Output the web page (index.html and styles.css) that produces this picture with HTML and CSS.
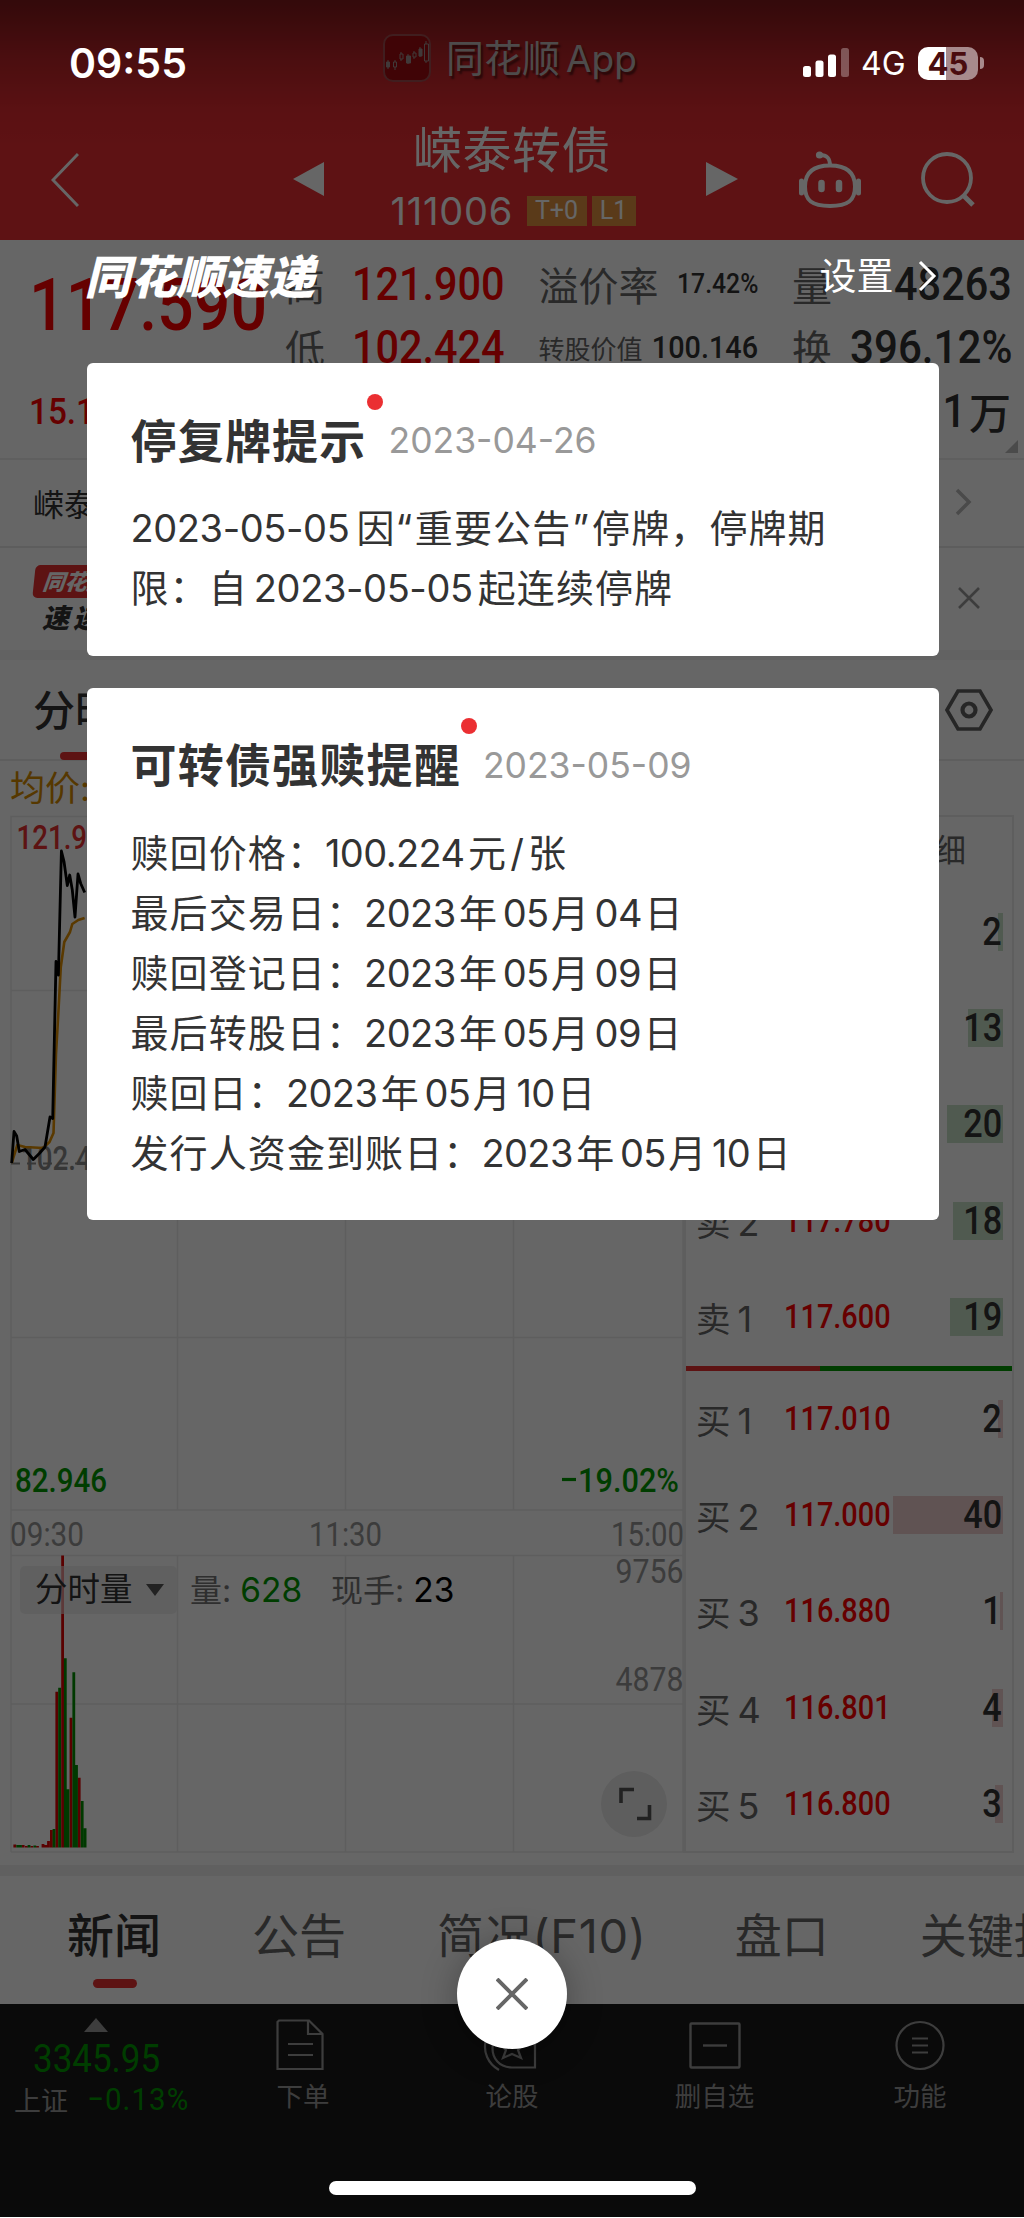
FILE: index.html
```html
<!DOCTYPE html>
<html lang="zh-CN">
<head>
<meta charset="utf-8">
<title>嵘泰转债 111006</title>
<link rel="stylesheet" href="styles.css">
</head>
<body>
<div class="screen">
  <main class="app">
    <header class="header">
      <div class="brand">
        <svg class="brand-icon" viewBox="0 0 48 48" fill="none" stroke="#a09090" stroke-width="1">
          <rect x="1" y="1" width="46" height="46" rx="9" fill="#a00c0f" stroke="#a04c4e" stroke-width="2"/>
          <path d="M5 26v9M12 26v10M18 18v9M25 20v10M31 17v8M37 13v10M43 7v22"/>
          <path d="M3.500 28h3v5h-3zM23.500 22h4v7h-4zM36 15h3v7h-3z" fill="#a09090"/>
          <path d="M10.500 28h3v5h-3zM17 20h3v5h-3zM30 19h3v4h-3zM41.500 10h4v17h-4z" fill="#a00c0f"/>
        </svg>
        <span class="brand-name">同花顺<span class="brand-app">App</span></span>
      </div>
      <nav class="nav">
        <svg class="nav-back" viewBox="0 0 28 56" fill="none" stroke="#fff" stroke-width="3"><path d="M27 2 2 28l25 26"/></svg>
        <svg class="nav-prev" viewBox="0 0 31 34"><path d="M31 0v34L0 17z" fill="#fff"/></svg>
        <div class="nav-title">
          <h1>嵘泰转债</h1>
          <div class="nav-sub"><span class="code">111006</span><span class="badge wide">T+0</span><span class="badge">L1</span></div>
        </div>
        <svg class="nav-next" viewBox="0 0 32 34"><path d="M0 0v34l32-17z" fill="#fff"/></svg>
        <svg class="nav-bot" viewBox="0 0 62 58" fill="none" stroke="#fff" stroke-width="4">
          <path d="M21 4c8 0 10 4 10 11"/><circle cx="20.500" cy="4" r="3.600" fill="#fff" stroke="none"/>
          <path d="M31 14.500c17 0 25 7 25 21S49 55 31 55 6 49.500 6 35.500s8-21 25-21z"/>
          <path d="M2.500 30v12M59.500 30v12" stroke-width="5" stroke-linecap="round"/>
          <path d="M22.500 32v6M40 32v6" stroke-width="6.500" stroke-linecap="round"/>
        </svg>
        <svg class="nav-search" viewBox="0 0 54 56" fill="none" stroke="#fff" stroke-width="3.800"><circle cx="26" cy="27" r="24"/><path d="m42 44 10 10" stroke-width="5"/></svg>
      </nav>
    </header>

    <section class="quote">
      <div class="last"><span class="din price">117.590</span><span class="din change">15.1</span></div>
      <div class="stats">
        <div class="stat red"><label>高</label><span class="din end">121.900</span></div>
        <div class="stat"><label>溢价率</label><span class="din end xs">17.42%</span></div>
        <div class="stat"><label>量</label><span class="din end">48263</span></div>
        <div class="stat red"><label>低</label><span class="din end">102.424</span></div>
        <div class="stat"><label class="small">转股价值</label><span class="din end sm">100.146</span></div>
        <div class="stat"><label>换</label><span class="din end pct">396.12%</span></div>
        <div></div><div></div>
        <div class="stat amount"><span class="din end">.1</span><span class="wan">万</span></div>
      </div>
      <i class="corner"></i>
    </section>

    <section class="related">
      <span>嵘泰</span>
      <svg viewBox="0 0 18 28" fill="none" stroke="#b8b8b8" stroke-width="3.500"><path d="m2 2 12 12L2 26"/></svg>
    </section>

    <section class="express">
      <div class="express-logo">
        <div class="express-tag">同花顺</div>
        <div class="express-word">速递</div>
      </div>
      <svg viewBox="0 0 22 22" fill="none" stroke="#999" stroke-width="2.600"><path d="m1 1 20 20M21 1 1 21"/></svg>
    </section>

    <section class="chart-tabs">
      <span class="chart-tab">分时</span>
      <svg viewBox="0 0 48 42" fill="none" stroke="#606060" stroke-width="3.600"><path d="M13 2h22l11 19-11 19H13L2 21z"/><circle cx="24" cy="21" r="6.500" stroke-width="4.200"/></svg>
    </section>

    <div class="avg">均价:</div>

    <section class="market">
      <div class="charts">
        <svg class="plot" width="674" height="1038" viewBox="10 815 674 1038">
          <g stroke="#ebebeb" stroke-width="1.600" fill="none">
            <path d="M11 1852V816.500h672V1852M11 990.500h672M11 1337.500h672M11 1510h672M11 1555.500h672M11 1704h672M11 1852h672"/>
            <path d="M177.500 816v694M345.500 816v694M513.500 816v694M177.500 1555v297M345.500 1555v297M513.500 1555v297"/>
          </g>
          <path d="M11 1163.500h672" stroke="#8c8c8c" stroke-width="2" stroke-dasharray="9 7"/>
          <g class="axis medium">
            <text x="21" y="1169.500" textLength="102" lengthAdjust="spacingAndGlyphs" fill="#888">102.424</text>
            <text x="16.500" y="848.500" textLength="102" lengthAdjust="spacingAndGlyphs" fill="#e93030">121.900</text>
            <text x="15" y="1491.500" textLength="92" lengthAdjust="spacingAndGlyphs" fill="#009a00">82.946</text>
            <text x="578" y="1491.500" textLength="101" lengthAdjust="spacingAndGlyphs" fill="#009a00">19.02%</text>
            <path d="M562 1479.500h14" stroke="#009a00" stroke-width="3.200"/>
          </g>
          <g class="axis" fill="#969696">
            <text x="10" y="1545.500" textLength="74" lengthAdjust="spacingAndGlyphs">09:30</text>
            <text x="309" y="1545.500" textLength="73" lengthAdjust="spacingAndGlyphs">11:30</text>
            <text x="611" y="1545.500" textLength="73" lengthAdjust="spacingAndGlyphs">15:00</text>
            <text x="615.500" y="1583" textLength="68" lengthAdjust="spacingAndGlyphs">9756</text>
            <text x="615.500" y="1691" textLength="68" lengthAdjust="spacingAndGlyphs">4878</text>
          </g>
          <path d="M11.700 1163l5.600-18 7.700 2 18 1 6.500-6 4-9 2.500-79 2.300-40 2.500-47 3.500-25 5.700-10 2.300-8 6-4 6.300-2" fill="none" stroke="#e08f00" stroke-width="2.600" stroke-linejoin="round"/>
          <path d="M11.700 1163 14 1131.500l2.700 4.500 2.600 15.500 5.700-2 8.300 10 6-6 5.700-6.500 5-30 2.700 1.500 3.300-157 2.400 13.500 3-124 2.600 10.500 3.300 24 2.400-10.500 2.600 15 2.700 27 3-43 2.700 9.500 4 9" fill="none" stroke="#000" stroke-width="2.800" stroke-linejoin="round"/>
          <g stroke-width="2.800" fill="none">
            <path stroke="#e00000" d="M14.800 1844.500v3M23.200 1845v2.500M26.400 1846v1.500M31.800 1846v1.500M37.500 1846v1.500M43 1844v3.500M45.700 1845v2.500M48.500 1841v6.500M51.400 1830v17.500M56.800 1691.700v155.800M62.600 1555.500v292M71 1717.700v129.800M79.200 1777.700v69.800"/>
            <path stroke="#009000" d="M17.700 1845v2.500M20.500 1845v2.500M29 1845v2.500M34.800 1845.500v2M54 1829v18.500M59.600 1687.700v159.800M65.300 1658.300v189.200M68 1789.300v58.200M73.800 1672.300v175.200M76.500 1765v82.500M82.200 1801v46.500M85.100 1828.300v19.200"/>
          </g>
        </svg>
        <div class="vol-bar">
          <span class="vol-select">分时量<i></i></span>
          <span class="vol-item">量: <b class="green">628</b></span>
          <span class="vol-item hand">现手: <b>23</b></span>
        </div>
        <svg class="expand" viewBox="0 0 66 66"><circle cx="33" cy="33" r="33" fill="#eaeaea"/><path d="M20 32V18.500h13M48.500 34v13.500H36" fill="none" stroke="#555" stroke-width="3.600"/></svg>
      </div>

      <div class="book">
        <div class="book-head">细</div>
        <div class="level ask"><span class="name">卖<em>5</em></span><span></span><span class="qty"><i style="width:5px"></i><b class="din end">2</b></span></div>
        <div class="level ask"><span class="name">卖<em>4</em></span><span></span><span class="qty"><i style="width:35px"></i><b class="din end">13</b></span></div>
        <div class="level ask"><span class="name">卖<em>3</em></span><span></span><span class="qty"><i style="width:56px"></i><b class="din end">20</b></span></div>
        <div class="level ask"><span class="name">卖<em>2</em></span><span class="din cost">117.780</span><span class="qty"><i style="width:50px"></i><b class="din end">18</b></span></div>
        <div class="level ask"><span class="name">卖<em>1</em></span><span class="din cost">117.600</span><span class="qty"><i style="width:53px"></i><b class="din end">19</b></span></div>
        <div class="ratio"><i></i></div>
        <div class="level"><span class="name">买<em>1</em></span><span class="din cost">117.010</span><span class="qty"><i style="width:5px"></i><b class="din end">2</b></span></div>
        <div class="level"><span class="name">买<em>2</em></span><span class="din cost">117.000</span><span class="qty"><i style="width:110px"></i><b class="din end">40</b></span></div>
        <div class="level"><span class="name">买<em>3</em></span><span class="din cost">116.880</span><span class="qty"><i style="width:3px"></i><b class="din end">1</b></span></div>
        <div class="level"><span class="name">买<em>4</em></span><span class="din cost">116.801</span><span class="qty"><i style="width:11px"></i><b class="din end">4</b></span></div>
        <div class="level"><span class="name">买<em>5</em></span><span class="din cost">116.800</span><span class="qty"><i style="width:8px"></i><b class="din end">3</b></span></div>
      </div>
    </section>

    <section class="info-tabs">
      <span class="active">新闻</span><span>公告</span><span class="brief">简况(F10)</span><span>盘口</span><span>关键指标</span>
    </section>

    <footer class="toolbar">
      <div class="index">
        <i class="up"></i>
        <span class="din idx">3345.95</span>
        <div class="idx-row"><span class="idx-name">上证</span><span class="din idx-pct">−0.13%</span></div>
      </div>
      <div class="tool">
        <svg class="doc" width="48" height="52" viewBox="0 0 48 52" fill="none" stroke="#999" stroke-width="2.200"><path d="M3 1.500h30L46.500 15v35H1.500V3z"/><path d="M32 1.500V15h14M12 25h25M12 36h25"/></svg>
        <span>下单</span>
      </div>
      <div class="tool">
        <svg width="62" height="52" viewBox="0 0 62 52" fill="none" stroke="#999" stroke-width="2.200"><path d="M18 51C-5 38 1 3 31 3"/><path d="M54 25v23.500H31c-26 0-26-38 0-38 14 0 23 8 23 18"/><path d="m31 17 4 7 8 1-6 6 3 8-9-4-9 4 3-8-6-6 8-1z"/></svg>
        <span>论股</span>
      </div>
      <div class="tool">
        <svg width="52" height="52" viewBox="0 0 52 52" fill="none" stroke="#999" stroke-width="2.400"><rect x="1.500" y="4.500" width="49" height="44" rx="1"/><path d="M14 26.500h24"/></svg>
        <span>删自选</span>
      </div>
      <div class="tool last-tool">
        <svg width="50" height="52" viewBox="0 0 50 52" fill="none" stroke="#999" stroke-width="2.200"><circle cx="25" cy="26.500" r="23.500"/><path d="M17 19.500h16M17 26.500h16M17 33.500h16"/></svg>
        <span>功能</span>
      </div>
    </footer>
  </main>

  <div class="mask"></div>

  <div class="status">
    <span class="time">09:55</span>
    <svg class="signal" viewBox="0 0 46 30" fill="#fff"><rect y="18" width="8" height="11" rx="2.500"/><rect x="12.500" y="12.500" width="8" height="16.500" rx="2.500"/><rect x="25" y="6.500" width="8" height="22.500" rx="2.500"/><rect x="38" width="8" height="29" rx="2.500" opacity=".3"/></svg>
    <span class="net">4G</span>
    <div class="battery"><span>45</span></div><i class="nub"></i>
  </div>

  <div class="dialog">
    <div class="dialog-head">
      <span class="dialog-brand">同花顺速递</span>
      <span class="dialog-set">设置</span>
      <svg viewBox="0 0 20 32" fill="none" stroke="#fff" stroke-width="3"><path d="m2 2 14 14L2 30"/></svg>
    </div>
    <article class="card">
      <header><h2>停复牌提示<i></i></h2><time>2023-04-26</time></header>
      <p><span class="n first">2023-05-05</span>因<span class="open">“</span>重要公告<span class="shut">”</span>停牌，停牌期<br>限：自<span class="n inner">2023-05-05</span>起连续停牌</p>
    </article>
    <article class="card">
      <header><h2>可转债强赎提醒<i></i></h2><time>2023-05-09</time></header>
      <p>赎回价格：<span class="n lead">100.224</span>元<span class="slash">/</span>张<br>
      最后交易日：<span class="n lead">2023</span>年<span class="n">05</span>月<span class="n">04</span>日<br>
      赎回登记日：<span class="n lead">2023</span>年<span class="n">05</span>月<span class="n">09</span>日<br>
      最后转股日：<span class="n lead">2023</span>年<span class="n">05</span>月<span class="n">09</span>日<br>
      赎回日：<span class="n lead">2023</span>年<span class="n">05</span>月<span class="n">10</span>日<br>
      发行人资金到账日：<span class="n lead">2023</span>年<span class="n">05</span>月<span class="n">10</span>日</p>
    </article>
  </div>

  <button class="close" aria-label="关闭"><svg viewBox="0 0 32 32" fill="none" stroke="#666" stroke-width="4"><path d="m1 1 30 30M31 1 1 31"/></svg></button>
  <div class="home"></div>
</div>
</body>
</html>
```
FILE: styles.css
```css
* { box-sizing: border-box; margin: 0; padding: 0; }
body { background: #fff; font-family: Inter, "Noto Sans CJK SC", sans-serif; color: #333; }
i, em { font-style: normal; }
svg { display: block; flex: none; }
.screen { position: relative; width: 1024px; height: 2218px; overflow: hidden; }
.app { height: 2217px; display: flex; flex-direction: column; overflow: hidden; background: #fff; }
.app > * { flex: none; }

/* narrow figures used for every quote number */
.din { display: inline-block; font-family: Roboto, "Noto Sans CJK SC", sans-serif; font-weight: 500; transform: scaleX(.9); transform-origin: left center; white-space: nowrap; }
.din.end { transform-origin: right center; margin-left: -30px; }

/* header */
.header { height: 240px; color: #fff; background: linear-gradient(rgba(0,0,0,.45), rgba(0,0,0,.2) 60px, rgba(0,0,0,.04) 110px, transparent 150px) #eb2d32; }
.brand { height: 116px; padding-left: 383px; display: flex; align-items: center; gap: 15px; }
.brand-icon { width: 48px; height: 48px; }
.brand-name { font-size: 38px; line-height: 50px; color: #c0bcbc; text-shadow: 2px 3px 2px rgba(0,0,0,.5); white-space: nowrap; }
.brand-app { margin-left: 6px; font-size: 37px; }
.nav { height: 124px; padding-left: 51px; display: grid; grid-template-columns: 242px 31px 382px 32px 61px 62px 60px 54px; align-items: start; }
.nav-back { width: 28px; height: 56px; margin-top: 36px; }
.nav-prev, .nav-next { height: 34px; margin-top: 46px; }
.nav-prev { width: 31px; }
.nav-next { width: 32px; }
.nav-title { padding: 7px 6px 0 0; text-align: center; }
.nav-title h1 { font-size: 49px; line-height: 56px; font-weight: 400; letter-spacing: .5px; }
.nav-sub { margin-top: 12px; height: 40px; display: flex; justify-content: center; align-items: center; }
.code { font-size: 38px; line-height: 40px; font-weight: 400; width: 121px; margin-right: 15px; text-align: left; letter-spacing: .8px; text-indent: 1px; }
.badge { width: 44px; height: 30px; font-size: 25px; line-height: 30px; font-weight: 400; background: #e09140; color: #fff; font-family: Roboto, sans-serif; position: relative; left: 1px; }
.badge.wide { width: 60px; margin-right: 5px; }
.nav-bot { grid-column: 6; width: 62px; height: 58px; margin-top: 35px; }
.nav-search { grid-column: 8; width: 54px; height: 56px; margin-top: 35px; }

/* quote */
.quote { position: relative; height: 220px; display: grid; grid-template-columns: 286px 1fr; border-bottom: 2px solid #eee; }
.last { display: flex; flex-direction: column; padding-left: 29px; color: #f00; }
.price { font-size: 73px; line-height: 80px; margin-top: 25px; transform: scaleX(.885); }
.change { font-size: 37px; line-height: 40px; margin-top: 47px; }
.stats { display: grid; grid-template-columns: repeat(3, 218px); column-gap: 35.500px; grid-auto-rows: 63.500px; padding-top: 12px; }
.stat { display: flex; justify-content: space-between; align-items: center; white-space: nowrap; font-size: 46px; }
.stat label { font-size: 40px; color: #666; font-weight: 400; margin-left: -1px; }
.stat label.small { font-size: 26px; }
.stat .din { margin-right: -1px; }
.stat .xs { font-size: 27.500px; }
.stat .sm { font-size: 32px; }
.stat .pct { transform: scaleX(.915); }
.stat.red .din { color: #f00; }
.amount { justify-content: flex-end; gap: 3px; }
.amount .din { letter-spacing: 1px; }
.wan { font-size: 42px; font-weight: 500; }
.corner { position: absolute; right: 6px; bottom: 5px; border-left: 13px solid transparent; border-bottom: 13px solid #bbb; }

.related { height: 88px; padding: 0 51px 2px 33px; display: flex; justify-content: space-between; align-items: center; border-bottom: 2px solid #e8e8e8; font-size: 31px; }
.related svg { width: 18px; height: 28px; }
.express { height: 112px; padding: 17px 44px 0 34px; display: flex; justify-content: space-between; border-bottom: 10px solid #f4f4f4; }
.express svg { width: 22px; height: 22px; margin-top: 22px; }
.express-logo { width: 110px; font-style: italic; font-weight: 900; color: #333; white-space: nowrap; }
.express-tag { height: 33px; padding-left: 9px; font-size: 22px; line-height: 35px; color: #fff; background: #e93030; border-radius: 5px; transform: skewX(-6deg); }
.express-word { margin-top: 6px; padding-left: 8px; font-size: 27px; line-height: 30px; letter-spacing: 4px; }

.chart-tabs { height: 101px; padding: 0 31px 0 33px; display: flex; justify-content: space-between; align-items: center; border-bottom: 2px solid #eaeaea; }
.chart-tabs svg { width: 48px; height: 42px; }
.chart-tab { position: relative; height: 100px; line-height: 101px; font-size: 42px; font-weight: 500; }
.chart-tab::after { content: ""; position: absolute; left: 27px; bottom: 0; width: 44px; height: 8px; border-radius: 4px; background: #e93030; }
.avg { height: 54px; padding-left: 10px; line-height: 55px; font-size: 35px; font-weight: 400; color: #d68c00; }

/* charts + order book */
.market { height: 1050px; padding-left: 10px; display: grid; grid-template-columns: 673px 331px; align-items: start; }
.charts { position: relative; height: 1038px; }
.axis { font-family: Roboto, sans-serif; font-size: 33px; font-weight: 400; }
.axis.medium { font-weight: 500; }
.vol-bar { position: absolute; left: 10px; top: 751px; height: 48px; display: flex; align-items: center; font-size: 32px; line-height: 48px; white-space: nowrap; }
.vol-select { width: 157px; height: 48px; padding-left: 15px; display: flex; align-items: center; gap: 13px; border-radius: 5px; background: rgba(232,232,232,.62); font-size: 32.500px; }
.vol-select i { border: 9px solid transparent; border-top: 12px solid #555; border-bottom: 0; }
.vol-item { margin-left: 13px; width: 128px; color: #777; font-weight: 400; }
.vol-item b { font-weight: 400; font-size: 33.500px; color: #000; }
.vol-item .green { color: #009a00; }
.expand { position: absolute; left: 591px; top: 956px; width: 66px; height: 66px; }
.book { height: 1038px; border: 2px solid #eaeaea; border-width: 2px 2px 2px 3px; }
.book-head { height: 67px; padding-right: 46px; text-align: right; line-height: 67px; font-size: 32px; color: #666; }
.level { height: 96.400px; padding: 0 9px 1px 10px; display: grid; grid-template-columns: 88px minmax(0, 1fr) 110px; align-items: center; }
.name { font-size: 34.500px; color: #666; }
.name em { margin-left: 7px; font-size: 36px; }
.cost { font-size: 32.500px; color: #f00; transform: scaleX(.89); }
.qty { position: relative; height: 38px; display: flex; justify-content: flex-end; align-items: center; padding-right: 1px; }
.qty i { position: absolute; right: 0; top: 0; height: 38px; background: #f0d0d0; }
.ask .qty i { background: #c8e0c8; }
.qty b { position: relative; font-size: 38px; line-height: 38px; }
.ratio { height: 5px; background: #009a00; }
.ratio i { display: block; height: 5px; width: 134px; background: #e93030; }

/* news tabs */
.info-tabs { height: 139px; padding-left: 67px; display: flex; border-top: 11px solid #f0f0f0; font-size: 47px; line-height: 120px; color: #666; white-space: nowrap; }
.info-tabs span { margin-right: 91px; position: relative; }
.info-tabs .brief { letter-spacing: .7px; margin-right: 88px; }
.info-tabs .active { font-weight: 500; color: #333; }
.info-tabs .active::after { content: ""; position: absolute; left: 26px; top: 103px; width: 44px; height: 9px; border-radius: 5px; background: #e93030; }

/* bottom bar */
.toolbar { height: 213px; display: grid; grid-template-columns: 202px 202px 216px 189px 1fr; background: #191919; }
.index { display: flex; flex-direction: column; color: #009900; }
.up { margin: 14px 0 0 84px; width: 24px; border: 12px solid transparent; border-bottom: 14px solid #999; border-top: 0; }
.idx { font-size: 38px; line-height: 40px; font-weight: 400; margin: 7px 0 0 33px; transform: scaleX(.92); }
.idx-row { display: flex; align-items: center; height: 40px; }
.idx-name { width: 74px; padding-left: 14px; font-size: 27px; color: #999; margin-right: 13px; white-space: nowrap; }
.idx-pct { font-size: 32px; font-weight: 400; letter-spacing: 1.200px; transform: scaleX(.92); }
.tool { display: flex; flex-direction: column; align-items: center; padding-top: 15px; color: #999; font-size: 26.500px; line-height: 40px; }
.tool span { margin-top: 5px; }
.tool .doc { margin-left: -6px; }
.last-tool { padding-left: 7px; }

/* layers above the page */
.mask { position: absolute; inset: 0 0 1px; background: rgba(0,0,0,.6); }
.status { position: absolute; left: 0; top: 0; width: 100%; height: 126px; padding-left: 69px; display: flex; align-items: center; color: #fff; }
.time { width: 734px; font-size: 41px; font-weight: 600; }
.signal { width: 46px; height: 30px; margin-right: 12px; }
.net { width: 57px; font-size: 32px; white-space: nowrap; }
.battery { width: 60px; height: 33px; border-radius: 10px; background: linear-gradient(90deg, #fff 28px, #a88a8c 28px); color: #4a0c0f; font-size: 31px; font-weight: 700; line-height: 33px; text-align: center; }
.nub { margin-left: 2px; width: 4px; height: 12px; border-radius: 0 4px 4px 0; background: #a88a8c; }

.dialog { position: absolute; left: 86.500px; top: 245px; width: 852px; }
.dialog-head { height: 118.400px; padding: 1px 0 0; display: flex; align-items: flex-start; color: #fff; white-space: nowrap; }
.dialog-brand { width: 733px; font-size: 46px; line-height: 62px; font-weight: 900; font-style: italic; text-indent: -2px; }
.dialog-set { width: 98px; font-size: 37px; line-height: 61px; }
.dialog-head svg { width: 20px; height: 32px; margin-top: 14px; }
.card { padding: 47px 45px 37px 44px; margin-bottom: 32px; background: #fff; border-radius: 6px; }
.card header { display: flex; align-items: center; height: 61px; }
.card h2 { position: relative; font-size: 46px; line-height: 60px; font-weight: 700; letter-spacing: 1.200px; white-space: nowrap; }
.card h2 i { position: absolute; right: -16px; top: -17px; width: 16px; height: 16px; border-radius: 8px; background: #eb2f32; }
.card time { margin-left: 22px; font-size: 35.500px; color: #999; font-weight: 400; white-space: nowrap; }
.card p { margin-top: 27px; font-size: 38px; line-height: 60.100px; letter-spacing: 1.100px; white-space: nowrap; }
.n { margin: 0 2.500px 0 4.500px; letter-spacing: -.6px; }
.n.lead { margin: 0 3.500px 0 -1px; }
.n.first { margin: 0 7px 0 0; letter-spacing: -.4px; }
.n.inner { margin: 0 5px 0 6px; letter-spacing: -.4px; }
.open { margin-right: 1.500px; }
.shut { margin: 0 2px 0 1px; }
.slash { margin: 0 3px; }

.close { position: absolute; left: 457px; top: 1939px; width: 110px; height: 110px; border: 0; border-radius: 50%; background: #fff; display: grid; place-items: center; box-shadow: 0 4px 36px rgba(0,0,0,.3); }
.close svg { width: 32px; height: 32px; }
.home { position: absolute; left: 329px; top: 2181px; width: 367px; height: 14px; border-radius: 7px; background: #fff; }
```
